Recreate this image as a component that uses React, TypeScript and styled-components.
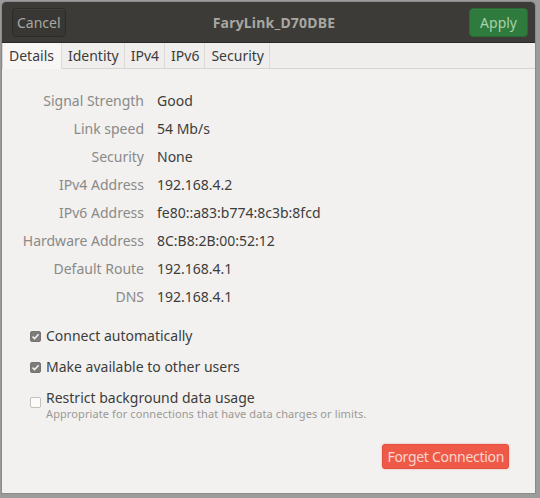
import React from "react";
import styled, { createGlobalStyle } from "styled-components";

const Global = createGlobalStyle`
  html, body { margin: 0; padding: 0; background: #9b9b9b; }
  body { font-family: "Noto Sans", "DejaVu Sans", sans-serif; }
`;

const Screen = styled.div`
  width: 540px;
  height: 498px;
  box-sizing: border-box;
  padding: 2px 5px 5px 2px;
  background: #9b9b9b;
`;

const Window = styled.div`
  width: 100%;
  height: 100%;
  display: flex;
  flex-direction: column;
  background: #f2f1f0;
  border-radius: 4px 4px 0 0;
  overflow: hidden;
  box-shadow: 0 0 0 1px #8a8a8a;
`;

const HeaderBar = styled.div`
  height: 40px;
  flex: none;
  display: grid;
  grid-template-columns: 1fr auto 1fr;
  align-items: center;
  padding: 0 7px 0 10px;
  background: #3c3b37;
  border-bottom: 1px solid #2a2926;
`;

const HeaderButton = styled.button<{ $primary?: boolean }>`
  justify-self: ${(p) => (p.$primary ? "end" : "start")};
  height: 29px;
  padding: 0 ${(p) => (p.$primary ? "10px" : "4px")};
  border-radius: 4px;
  font-family: inherit;
  font-size: 14px;
  color: ${(p) => (p.$primary ? "#a5d3ab" : "#a8a7a2")};
  background: ${(p) => (p.$primary ? "#2f7a3d" : "#383733")};
  border: 1px solid ${(p) => (p.$primary ? "#276a34" : "#2c2b28")};
  box-shadow: inset 0 1px rgba(255, 255, 255, 0.05);
`;

const Title = styled.div`
  font-size: 14px;
  font-weight: bold;
  color: #a8a7a2;
  padding-left: 8px;
  letter-spacing: 0.2px;
`;

const TabStrip = styled.div`
  height: 25px;
  flex: none;
  display: flex;
  align-items: stretch;
  background: #efeeec;
  border-bottom: 1px solid #d6d4d1;
`;

const Tab = styled.div<{ $active?: boolean }>`
  display: flex;
  align-items: center;
  padding: 0 ${(p) => (p.$active ? "7px 0 6px" : "5px")};
  font-size: 14px;
  color: #3c3c3c;
  background: ${(p) => (p.$active ? "#f7f6f5" : "transparent")};
  border-left: 1px solid ${(p) => (p.$active ? "#d6d4d1" : "transparent")};
  border-right: 1px solid #dcdad7;
  border-bottom: 1px solid ${(p) => (p.$active ? "#f7f6f5" : "transparent")};
  margin-bottom: -1px;
`;

const Body = styled.div`
  flex: 1;
  display: flex;
  flex-direction: column;
  padding: 18px 26px 0 0;
`;

const InfoGrid = styled.div`
  display: grid;
  grid-template-columns: 142px auto;
  column-gap: 13px;
`;

const Label = styled.div`
  height: 28px;
  line-height: 28px;
  text-align: right;
  font-size: 14px;
  color: #8a8a87;
`;

const Value = styled.div`
  height: 28px;
  line-height: 28px;
  font-size: 14px;
  color: #3d3d3b;
`;

const Options = styled.div`
  display: flex;
  flex-direction: column;
  padding: 16px 0 0 28px;
`;

const CheckRow = styled.label`
  display: flex;
  align-items: flex-start;
  gap: 5px;
  min-height: 31px;
`;

const Box = styled.span<{ $checked?: boolean }>`
  flex: none;
  width: 11px;
  height: 11px;
  margin-top: ${(p) => (p.$checked ? "4px" : "8px")};
  border-radius: 2px;
  box-sizing: border-box;
  display: flex;
  align-items: center;
  justify-content: center;
  background: ${(p) => (p.$checked ? "#7d7c79" : "#fbfbfa")};
  border: 1px solid ${(p) => (p.$checked ? "#757471" : "#c3c1be")};
`;

const CheckText = styled.div`
  display: flex;
  flex-direction: column;
`;

const CheckLabel = styled.span`
  font-size: 14px;
  line-height: 18px;
  color: #3d3d3b;
`;

const CheckHint = styled.span`
  font-size: 11px;
  line-height: 15px;
  margin-top: -1px;
  letter-spacing: 0.1px;
  color: #9a9996;
`;

const Footer = styled.div`
  margin-top: auto;
  display: flex;
  justify-content: flex-end;
  padding: 0 0 24px 0;
`;

const DangerButton = styled.button`
  height: 25px;
  padding: 0 4px;
  border-radius: 3px;
  border: 1px solid #e0523f;
  background: #ef5a48;
  color: #f9d6d0;
  font-family: inherit;
  font-size: 14px;
  letter-spacing: -0.3px;
  box-shadow: 0 0 2px rgba(239, 90, 72, 0.5);
`;

const Check = () => (
  <svg width="9" height="9" viewBox="0 0 9 9">
    <path d="M1.5 4.6 L3.6 6.6 L7.6 2.2" stroke="#f2f1f0" strokeWidth="1.5" fill="none" />
  </svg>
);

const details: [string, string][] = [
  ["Signal Strength", "Good"],
  ["Link speed", "54 Mb/s"],
  ["Security", "None"],
  ["IPv4 Address", "192.168.4.2"],
  ["IPv6 Address", "fe80::a83:b774:8c3b:8fcd"],
  ["Hardware Address", "8C:B8:2B:00:52:12"],
  ["Default Route", "192.168.4.1"],
  ["DNS", "192.168.4.1"],
];

const tabs = ["Details", "Identity", "IPv4", "IPv6", "Security"];

export default function App() {
  return (
    <>
      <Global />
      <Screen>
        <Window>
          <HeaderBar>
            <HeaderButton>Cancel</HeaderButton>
            <Title>FaryLink_D70DBE</Title>
            <HeaderButton $primary>Apply</HeaderButton>
          </HeaderBar>
          <TabStrip>
            {tabs.map((t, i) => (
              <Tab key={t} $active={i === 0}>
                {t}
              </Tab>
            ))}
          </TabStrip>
          <Body>
            <InfoGrid>
              {details.map(([l, v]) => (
                <React.Fragment key={l}>
                  <Label>{l}</Label>
                  <Value>{v}</Value>
                </React.Fragment>
              ))}
            </InfoGrid>
            <Options>
              <CheckRow>
                <Box $checked>
                  <Check />
                </Box>
                <CheckText>
                  <CheckLabel>Connect automatically</CheckLabel>
                </CheckText>
              </CheckRow>
              <CheckRow>
                <Box $checked>
                  <Check />
                </Box>
                <CheckText>
                  <CheckLabel>Make available to other users</CheckLabel>
                </CheckText>
              </CheckRow>
              <CheckRow>
                <Box />
                <CheckText>
                  <CheckLabel>Restrict background data usage</CheckLabel>
                  <CheckHint>Appropriate for connections that have data charges or limits.</CheckHint>
                </CheckText>
              </CheckRow>
            </Options>
            <Footer>
              <DangerButton>Forget Connection</DangerButton>
            </Footer>
          </Body>
        </Window>
      </Screen>
    </>
  );
}
